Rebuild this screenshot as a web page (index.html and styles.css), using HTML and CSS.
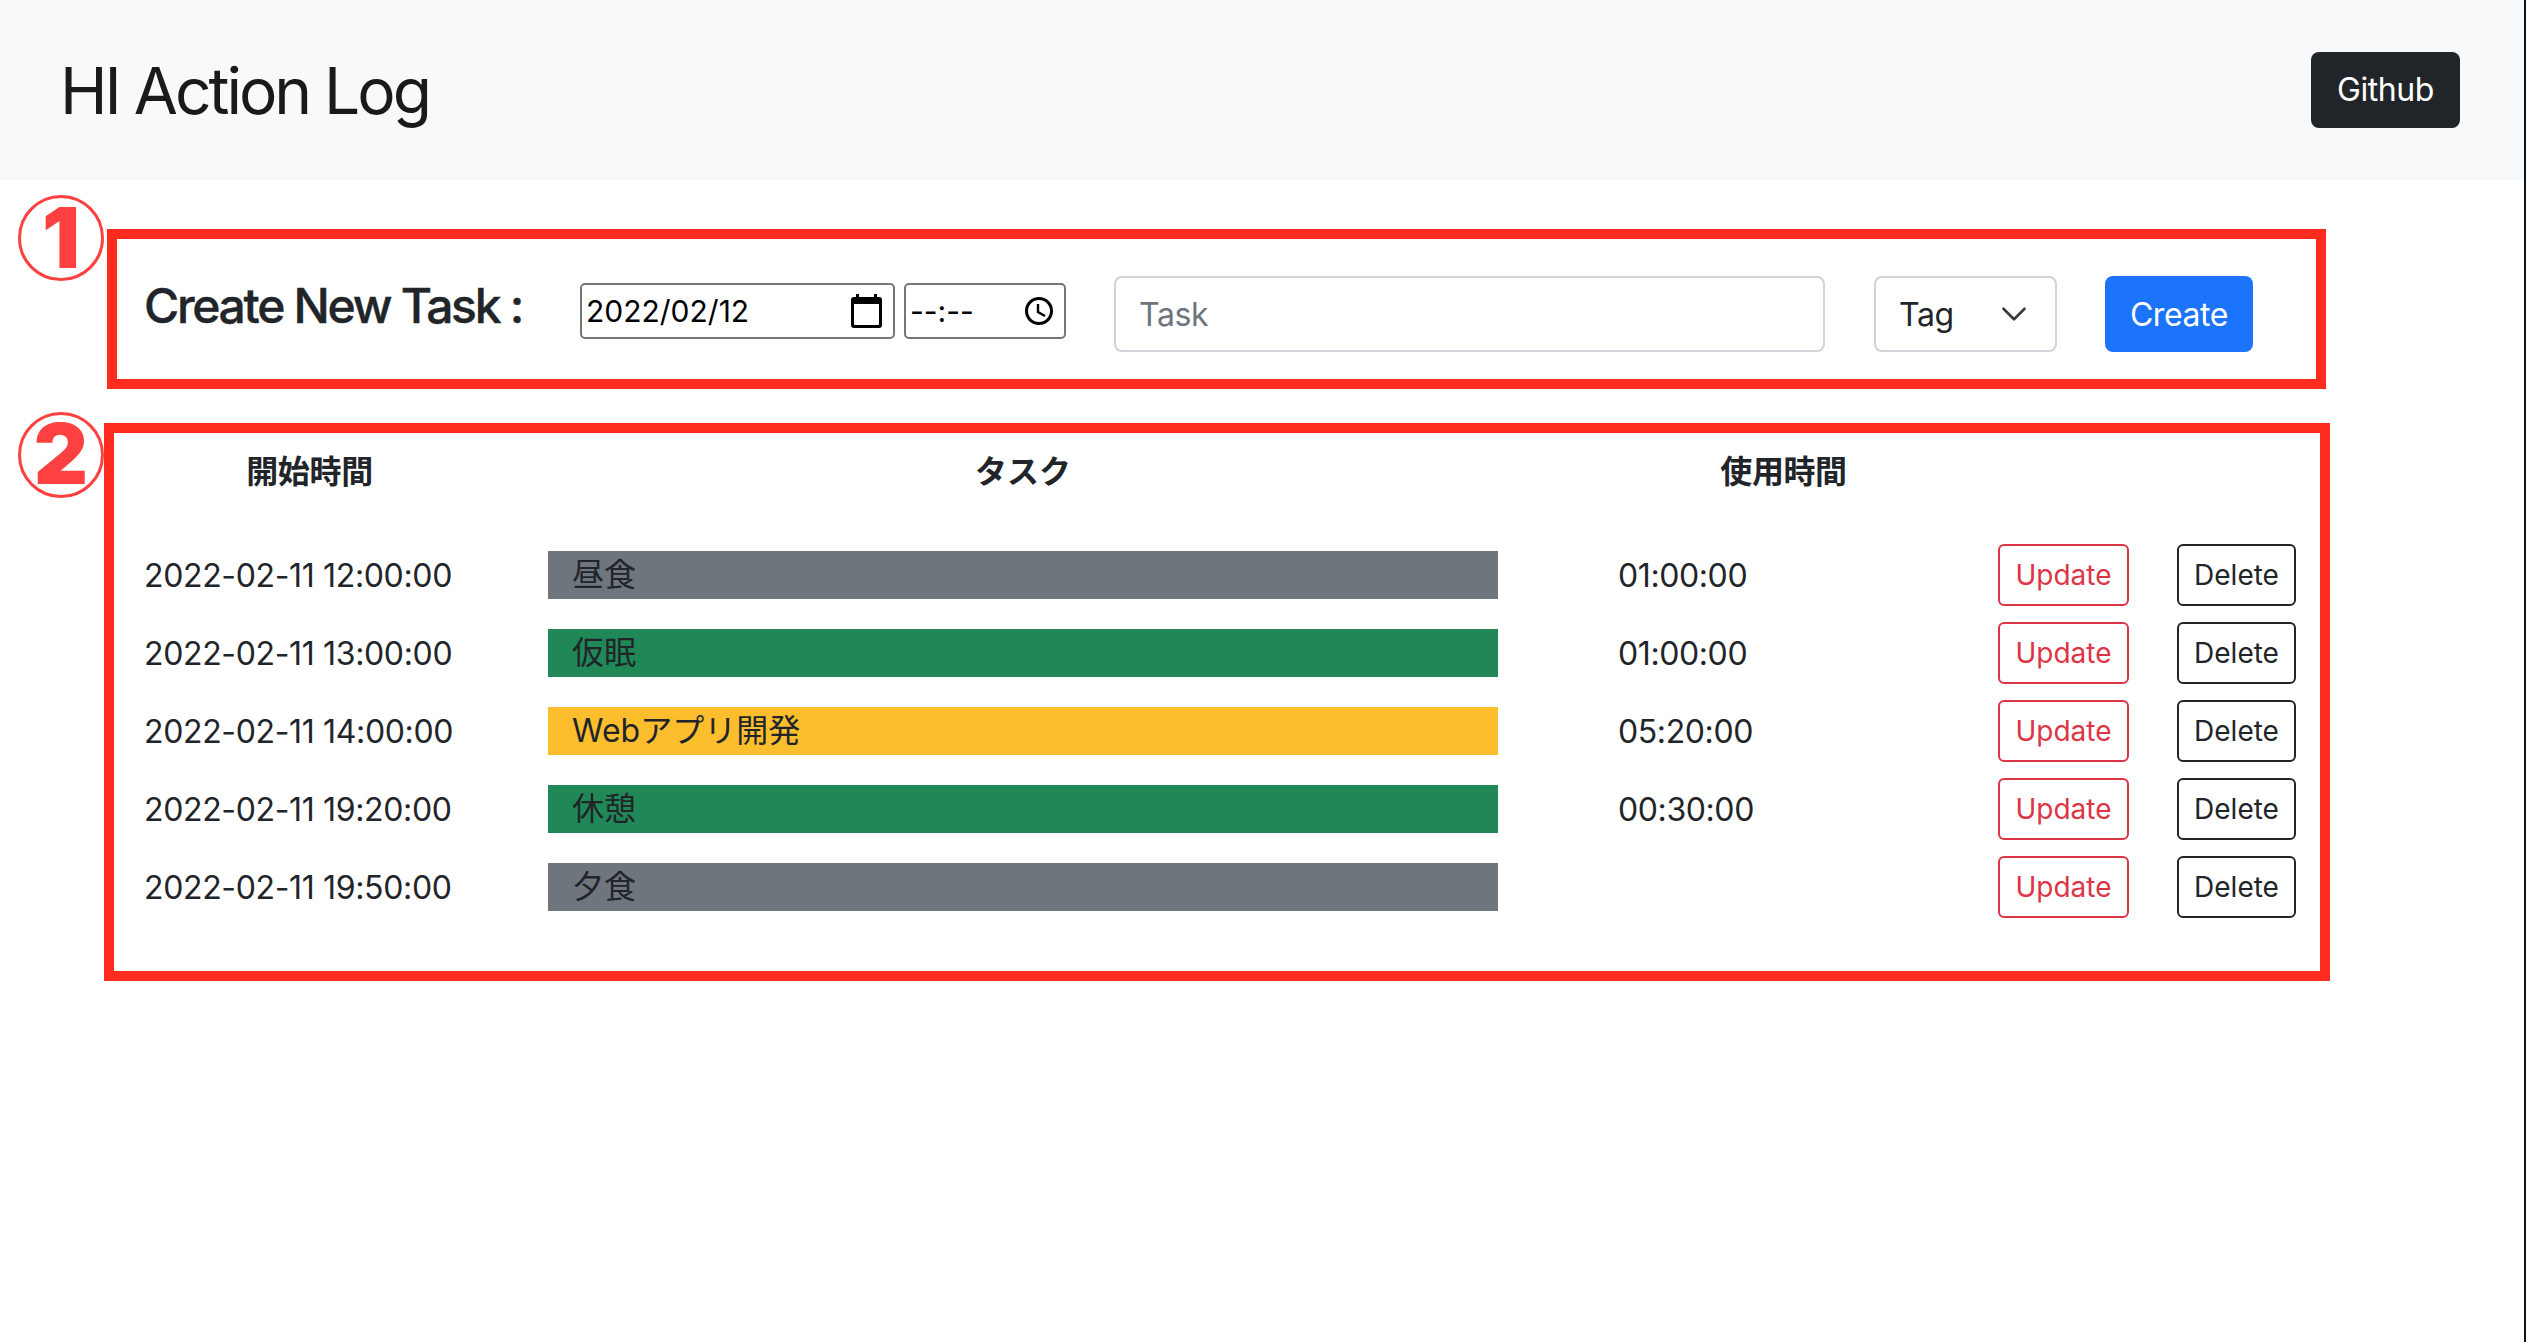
FILE: index.html
```html
<!DOCTYPE html>
<html lang="ja">
<head>
  <meta charset="UTF-8">
  <title>HI Action Log</title>
  <link rel="stylesheet" href="styles.css">
</head>
<body>
  <nav class="navbar">
    <span class="brand">HI Action Log</span>
    <a class="btn btn-dark" href="#">Github</a>
  </nav>

  <section class="mark-box form-box">
    <span class="circle-num">1</span>
    <h4 class="form-title">Create New Task :</h4>
    <div class="native-field date-field">
      <span>2022/02/12</span>
      <svg class="date-icon" viewBox="0 0 31 34" width="31" height="34">
        <path d="M5 0h3v4H5zM23 0h3v4h-3z" fill="#000"/>
        <path fill-rule="evenodd" d="M3 3h25a3 3 0 0 1 3 3v25a3 3 0 0 1-3 3H3a3 3 0 0 1-3-3V6a3 3 0 0 1 3-3zM3 10v20a1 1 0 0 0 1 1h23a1 1 0 0 0 1-1V10z" fill="#000"/>
      </svg>
    </div>
    <div class="native-field time-field">
      <span>--:--</span>
      <svg class="time-icon" viewBox="0 0 28 28" width="28" height="28">
        <circle cx="14" cy="14" r="12.5" fill="none" stroke="#000" stroke-width="3"/>
        <path d="M13 7v8l7 4" fill="none" stroke="#000" stroke-width="2.4"/>
      </svg>
    </div>
    <input class="form-control task-input" type="text" placeholder="Task">
    <div class="form-control tag-select">
      <span>Tag</span>
      <svg viewBox="0 0 16 16" width="28" height="28">
        <path d="M2 5l6 6 6-6" fill="none" stroke="#343a40" stroke-width="1.5" stroke-linecap="round" stroke-linejoin="round"/>
      </svg>
    </div>
    <button class="btn btn-primary" type="button">Create</button>
  </section>

  <section class="mark-box list-box">
    <span class="circle-num">2</span>
    <div class="task-grid">
      <div class="head col-start">開始時間</div>
      <div class="head">タスク</div>
      <div class="head col-used">使用時間</div>
      <div></div>
      <div></div>
    </div>

    <div class="task-grid task-row">
      <div class="col-start">2022-02-11 12:00:00</div>
      <div class="bar bar-gray">昼食</div>
      <div class="col-used">01:00:00</div>
      <div><button class="btn-sm btn-update" type="button">Update</button></div>
      <div><button class="btn-sm btn-delete" type="button">Delete</button></div>
    </div>
    <div class="task-grid task-row">
      <div class="col-start">2022-02-11 13:00:00</div>
      <div class="bar bar-green">仮眠</div>
      <div class="col-used">01:00:00</div>
      <div><button class="btn-sm btn-update" type="button">Update</button></div>
      <div><button class="btn-sm btn-delete" type="button">Delete</button></div>
    </div>
    <div class="task-grid task-row">
      <div class="col-start">2022-02-11 14:00:00</div>
      <div class="bar bar-yellow">Webアプリ開発</div>
      <div class="col-used">05:20:00</div>
      <div><button class="btn-sm btn-update" type="button">Update</button></div>
      <div><button class="btn-sm btn-delete" type="button">Delete</button></div>
    </div>
    <div class="task-grid task-row">
      <div class="col-start">2022-02-11 19:20:00</div>
      <div class="bar bar-green">休憩</div>
      <div class="col-used">00:30:00</div>
      <div><button class="btn-sm btn-update" type="button">Update</button></div>
      <div><button class="btn-sm btn-delete" type="button">Delete</button></div>
    </div>
    <div class="task-grid task-row">
      <div class="col-start">2022-02-11 19:50:00</div>
      <div class="bar bar-gray">夕食</div>
      <div class="col-used"></div>
      <div><button class="btn-sm btn-update" type="button">Update</button></div>
      <div><button class="btn-sm btn-delete" type="button">Delete</button></div>
    </div>
  </section>
</body>
</html>
```

FILE: styles.css
```css
* {
  box-sizing: border-box;
}

html {
  height: 100%;
}

body {
  margin: 0;
  min-height: 100%;
  border-right: 2px solid #08131e;
  font-family: Inter, "Noto Sans CJK JP", sans-serif;
  font-size: 32px;
  color: #212529;
  background: #fff;
}

.navbar {
  display: flex;
  justify-content: space-between;
  align-items: center;
  height: 180px;
  padding: 0 64px 0 60px;
  background: #f8f9fa;
}

.brand {
  font-size: 64px;
  letter-spacing: -3px;
  color: #1a1a1a;
}

.btn {
  display: block;
  height: 76px;
  border: none;
  border-radius: 8px;
  font-family: inherit;
  font-size: 32px;
  line-height: 76px;
  letter-spacing: -0.4px;
  text-align: center;
  text-decoration: none;
  color: #fff;
}

.btn-dark {
  width: 149px;
  background: #212529;
}

.btn-primary {
  width: 148px;
  margin-left: 48px;
  background: #1b74fb;
}

/* red annotation frames */
.mark-box {
  position: relative;
  border: 10px solid #fe2c1f;
}

.circle-num {
  position: absolute;
  width: 86px;
  height: 86px;
  border: 3px solid #ff4040;
  border-radius: 50%;
  background: #fff;
  font-size: 84px;
  font-weight: 900;
  line-height: 80px;
  text-align: center;
  color: #ff4040;
}

.form-box {
  display: flex;
  align-items: flex-start;
  width: 2219px;
  height: 160px;
  margin: 49px 0 0 107px;
  padding: 37px 0 0 27px;
}

.form-box .circle-num {
  top: -44px;
  left: -99px;
}

.form-title {
  width: 436px;
  margin: -8px 0 0;
  font-size: 48px;
  font-weight: 500;
  line-height: 76px;
  letter-spacing: -2.3px;
  -webkit-text-stroke: 0.4px #212529;
}

.native-field {
  display: flex;
  justify-content: space-between;
  align-items: center;
  height: 56px;
  margin-top: 7px;
  padding: 0 11px 0 4px;
  border: 2px solid #767676;
  border-radius: 5px;
  font-size: 30px;
  color: #000;
}

.date-field {
  width: 315px;
}

.time-field {
  width: 162px;
  margin-left: 9px;
}

.form-control {
  height: 76px;
  border: 2px solid #ced4da;
  border-radius: 8px;
  background: #fff;
  font-family: inherit;
  font-size: 32px;
  letter-spacing: -0.4px;
  color: #212529;
}

.task-input {
  width: 711px;
  margin-left: 48px;
  padding: 0 23px;
  outline: none;
}

.task-input::placeholder {
  color: #6c757d;
}

.tag-select {
  display: flex;
  justify-content: space-between;
  align-items: center;
  width: 183px;
  margin-left: 49px;
  padding: 0 24px 0 23px;
}

.tag-select svg {
  margin-right: 3px;
}

.list-box {
  width: 2226px;
  height: 558px;
  margin: 34px 0 0 104px;
  padding: 15px 0 0 30px;
}

.list-box .circle-num {
  top: -21px;
  left: -96px;
  line-height: 78px;
}

.task-grid {
  display: grid;
  grid-template-columns: 404px 950px 500px 179px 119px;
  align-items: center;
}

.head {
  margin-bottom: 48px;
  font-weight: 700;
  line-height: 48px;
  text-align: center;
}

.col-start {
  padding-right: 73px;
  letter-spacing: -0.35px;
}

.col-used {
  padding: 0 49px 0 120px;
  letter-spacing: -0.4px;
}

.task-row {
  height: 62px;
  margin-bottom: 16px;
}

.bar {
  height: 48px;
  padding-left: 24px;
  line-height: 48px;
}

.bar-gray {
  background: #6e757c;
}

.bar-green {
  background: #208857;
}

.bar-yellow {
  background: #fdbe2d;
}

.btn-sm {
  display: block;
  height: 62px;
  padding: 0;
  border: 2px solid;
  border-radius: 6px;
  background: #fff;
  font-family: inherit;
  font-size: 28px;
}

.btn-update {
  width: 131px;
  border-color: #dc3545;
  color: #dc3545;
}

.btn-delete {
  width: 119px;
  border-color: #212529;
  color: #212529;
}
```
